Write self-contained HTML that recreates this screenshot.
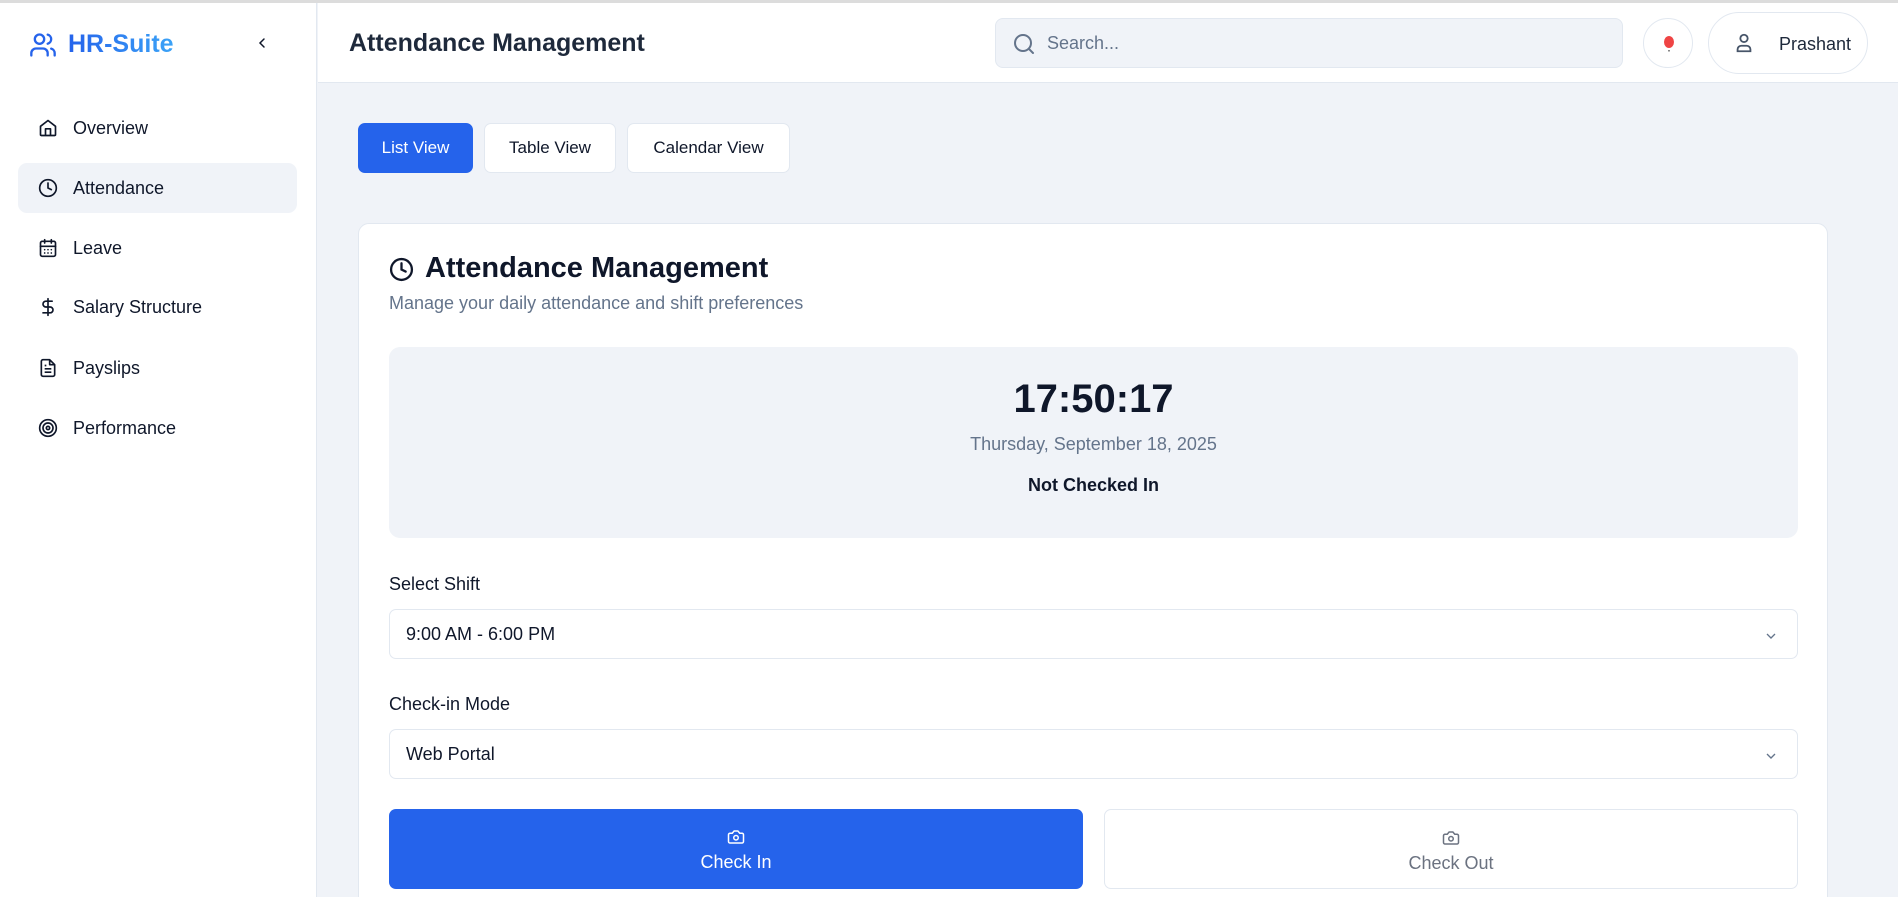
<!DOCTYPE html>
<html><head><meta charset="utf-8"><style>
*{box-sizing:border-box;margin:0;padding:0}
html{overflow:hidden;height:897px}
body{width:1898px;height:897px;overflow:hidden;font-family:"Liberation Sans",sans-serif;background:#f0f3f8;color:#0f172a;position:relative}
.topline{position:absolute;left:0;top:0;width:1898px;height:3px;background:#dcdcdc}
.side{position:absolute;left:0;top:3px;width:317px;height:894px;background:#fff;border-right:1px solid #e2e8f0}
.logo{position:absolute;left:29px;top:27px;display:flex;align-items:center}
.logo span{font-size:25px;font-weight:700;margin-left:11px;background:linear-gradient(90deg,#2563eb,#3ba3f7);-webkit-background-clip:text;color:transparent}
.nav{position:absolute;left:18px;width:279px;height:50px;display:flex;align-items:center;font-size:18px;color:#0f172a;border-radius:9px}
.nav svg{position:absolute;left:20px}
.nav span{position:absolute;left:55px}
.nav.act{background:#f0f3f8}
.header{position:absolute;left:318px;top:3px;width:1580px;height:80px;background:#fff;border-bottom:1px solid #e2e8f0}
.title{position:absolute;left:349px;top:29px;font-size:25px;font-weight:700;color:#1e293b}
.search{position:absolute;left:995px;top:18px;width:628px;height:50px;background:#f0f3f8;border:1px solid #e2e8f0;border-radius:8px}
.search span{position:absolute;left:51px;top:14px;font-size:18px;color:#64748b}
.bell{position:absolute;left:1643px;top:18px;width:50px;height:50px;border:1px solid #e2e8f0;border-radius:50%;background:#fff}
.prof{position:absolute;left:1708px;top:12px;width:160px;height:62px;border:1px solid #e2e8f0;border-radius:31px;background:#fff}
.prof span{position:absolute;left:70px;top:21px;font-size:18px;color:#1e293b}
.tab{position:absolute;top:123px;height:50px;border:1px solid #e2e8f0;border-radius:7px;background:#fff;font-size:17px;display:flex;align-items:center;justify-content:center}
.card{position:absolute;left:358px;top:223px;width:1470px;height:700px;background:#fff;border:1px solid #e2e8f0;border-radius:11px}
.lbl{position:absolute;left:389px;font-size:18px;color:#0f172a}
.sel{position:absolute;left:389px;width:1409px;height:50px;border:1px solid #e2e8f0;border-radius:7px;background:#fff}
.sel span{position:absolute;left:16px;top:14px;font-size:18px}
.sel svg{position:absolute;right:18px;top:18px}
.btn{position:absolute;top:809px;height:80px;border-radius:7px;text-align:center;font-size:18px}
.btn svg{display:block;margin:19px auto 6px}
</style></head><body>
<div class="topline"></div>
<div class="side">
 <div class="logo"><svg width="28" height="28" viewBox="0 0 24 24" fill="none" stroke="#2563eb" stroke-width="2" stroke-linecap="round" stroke-linejoin="round"><path d="M16 21v-2a4 4 0 0 0-4-4H6a4 4 0 0 0-4 4v2"/><circle cx="9" cy="7" r="4"/><path d="M22 21v-2a4 4 0 0 0-3-3.870"/><path d="M16 3.13a4 4 0 0 1 0 7.75"/></svg><span>HR-Suite</span></div>
 <svg style="position:absolute;left:254px;top:32px" width="16" height="16" viewBox="0 0 24 24" fill="none" stroke="#0f172a" stroke-width="2.2" stroke-linecap="round"><path d="M15 18l-6-6 6-6"/></svg>
 <div class="nav" style="top:100px"><svg width="20" height="20" viewBox="0 0 24 24" fill="none" stroke="#0f172a" stroke-width="2" stroke-linejoin="round"><path d="M3 10l9-7 9 7v10a1 1 0 0 1-1 1H4a1 1 0 0 1-1-1z"/><path d="M9 21v-8h6v8"/></svg><span>Overview</span></div>
 <div class="nav act" style="top:160px"><svg width="20" height="20" viewBox="0 0 24 24" fill="none" stroke="#0f172a" stroke-width="2" stroke-linecap="round"><circle cx="12" cy="12" r="10"/><path d="M12 6v6l4 2"/></svg><span>Attendance</span></div>
 <div class="nav" style="top:220px"><svg width="20" height="20" viewBox="0 0 24 24" fill="none" stroke="#0f172a" stroke-width="2" stroke-linecap="round"><rect x="3" y="4" width="18" height="18" rx="2"/><path d="M16 2v4M8 2v4M3 10h18M8 14h.01M12 14h.01M16 14h.01M8 18h.01M12 18h.01M16 18h.01"/></svg><span>Leave</span></div>
 <div class="nav" style="top:279px"><svg width="20" height="20" viewBox="0 0 24 24" fill="none" stroke="#0f172a" stroke-width="2" stroke-linecap="round"><path d="M12 2v20M17 5H9.5a3.5 3.5 0 0 0 0 7h5a3.5 3.5 0 0 1 0 7H6"/></svg><span>Salary Structure</span></div>
 <div class="nav" style="top:340px"><svg width="20" height="20" viewBox="0 0 24 24" fill="none" stroke="#0f172a" stroke-width="2" stroke-linejoin="round"><path d="M14 2H6a2 2 0 0 0-2 2v16a2 2 0 0 0 2 2h12a2 2 0 0 0 2-2V8z"/><path d="M14 2v6h6M16 13H8M16 17H8M10 9H8"/></svg><span>Payslips</span></div>
 <div class="nav" style="top:400px"><svg width="20" height="20" viewBox="0 0 24 24" fill="none" stroke="#0f172a" stroke-width="2"><circle cx="12" cy="12" r="10"/><circle cx="12" cy="12" r="6"/><circle cx="12" cy="12" r="2"/></svg><span>Performance</span></div>
</div>
<div class="header"></div>
<div class="title">Attendance Management</div>
<div class="search"><svg style="position:absolute;left:16px;top:13px" width="24" height="24" viewBox="0 0 24 24" fill="none" stroke="#64748b" stroke-width="2" stroke-linecap="round"><circle cx="11" cy="11" r="8"/><path d="M21 21l-4.3-4.3"/></svg><span>Search...</span></div>
<div class="bell"><svg style="position:absolute;left:15px;top:14px" width="20" height="22" viewBox="0 0 20 22"><ellipse cx="10" cy="9" rx="5" ry="6" fill="#ef4444"/><rect x="9" y="17" width="2" height="1.5" fill="#888"/></svg></div>
<div class="prof"><svg style="position:absolute;left:24px;top:19px" width="22" height="22" viewBox="0 0 24 24" fill="none" stroke="#475569" stroke-width="2"><circle cx="12" cy="7" r="4"/><path d="M5 21v-2a4 4 0 0 1 4-4h6a4 4 0 0 1 4 4v2z"/></svg><span>Prashant</span></div>

<div class="tab" style="left:358px;width:115px;background:#2563eb;color:#fff;border-color:#2563eb">List View</div>
<div class="tab" style="left:484px;width:132px">Table View</div>
<div class="tab" style="left:627px;width:163px">Calendar View</div>

<div class="card"></div>
<svg style="position:absolute;left:389px;top:257px" width="25" height="25" viewBox="0 0 24 24" fill="none" stroke="#0f172a" stroke-width="2.2" stroke-linecap="round"><circle cx="12" cy="12" r="10"/><path d="M12 6v6l4 2"/></svg>
<div style="position:absolute;left:425px;top:252px;font-size:29px;font-weight:700">Attendance Management</div>
<div style="position:absolute;left:389px;top:293px;font-size:18px;color:#64748b">Manage your daily attendance and shift preferences</div>
<div style="position:absolute;left:389px;top:347px;width:1409px;height:191px;background:#f0f3f8;border-radius:11px;text-align:center">
 <div style="margin-top:30px;font-size:40px;font-weight:700">17:50:17</div>
 <div style="margin-top:12px;font-size:18px;color:#64748b">Thursday, September 18, 2025</div>
 <div style="margin-top:20px;font-size:18px;font-weight:700">Not Checked In</div>
</div>
<div class="lbl" style="top:574px">Select Shift</div>
<div class="sel" style="top:609px"><span>9:00 AM - 6:00 PM</span><svg width="16" height="16" viewBox="0 0 24 24" fill="none" stroke="#64748b" stroke-width="2"><path d="M6 9l6 6 6-6"/></svg></div>
<div class="lbl" style="top:694px">Check-in Mode</div>
<div class="sel" style="top:729px"><span>Web Portal</span><svg width="16" height="16" viewBox="0 0 24 24" fill="none" stroke="#64748b" stroke-width="2"><path d="M6 9l6 6 6-6"/></svg></div>
<div class="btn" style="left:389px;width:694px;background:#2563eb;color:#fff"><svg width="18" height="18" viewBox="0 0 24 24" fill="none" stroke="#fff" stroke-width="2"><path d="M14.5 4h-5L7 7H4a2 2 0 0 0-2 2v9a2 2 0 0 0 2 2h16a2 2 0 0 0 2-2V9a2 2 0 0 0-2-2h-3z"/><circle cx="12" cy="13" r="3"/></svg>Check In</div>
<div class="btn" style="left:1104px;width:694px;background:#fff;border:1px solid #e2e8f0;color:#6b7280"><svg width="18" height="18" viewBox="0 0 24 24" fill="none" stroke="#6b7280" stroke-width="2"><path d="M14.5 4h-5L7 7H4a2 2 0 0 0-2 2v9a2 2 0 0 0 2 2h16a2 2 0 0 0 2-2V9a2 2 0 0 0-2-2h-3z"/><circle cx="12" cy="13" r="3"/></svg>Check Out</div>
</body></html>
